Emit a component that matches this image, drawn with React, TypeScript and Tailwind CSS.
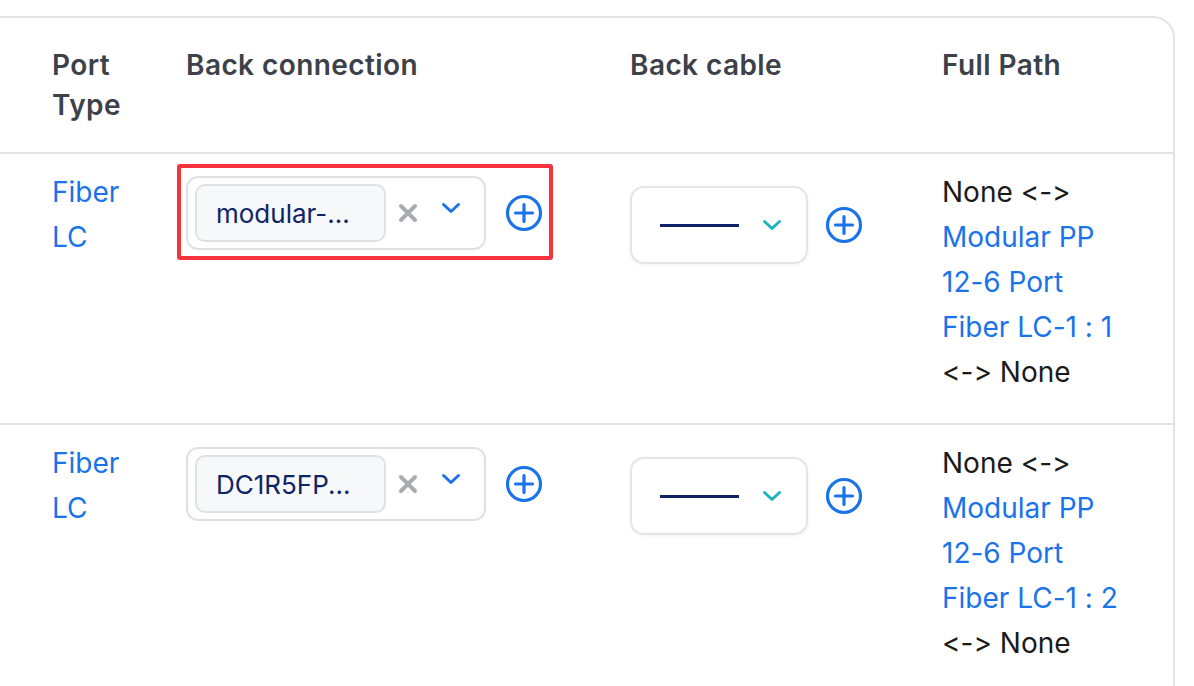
import React from 'react';

type Row = {
    portType: string[];
    connection: string;
    path: string[];
    highlighted?: boolean;
};

const rows: Row[] = [
    { portType: ['Fiber', 'LC'], connection: 'modular-...', path: ['Modular PP', '12-6 Port', 'Fiber LC-1 : 1'], highlighted: true },
    { portType: ['Fiber', 'LC'], connection: 'DC1R5FP...', path: ['Modular PP', '12-6 Port', 'Fiber LC-1 : 2'] },
];

const PlusCircle: React.FC = () => (
    <svg width="38" height="38" viewBox="0 0 38 38" fill="none" stroke="#1a73e8" strokeWidth={3.2} strokeLinecap="round">
        <circle cx="19" cy="19" r="16.5" />
        <path d="M19 10.5v17M10.5 19h17" />
    </svg>
);

const Chevron: React.FC<{ color: string }> = ({ color }) => (
    <svg width="20" height="12" viewBox="0 0 20 12" fill="none" stroke={color} strokeWidth={3} strokeLinecap="round" strokeLinejoin="round">
        <path d="M2.5 2.5l7.5 7 7.5-7" />
    </svg>
);

const Cross: React.FC = () => (
    <svg width="20" height="20" viewBox="0 0 20 20" fill="none" stroke="#a8abb0" strokeWidth={4} strokeLinecap="round">
        <path d="M3 3l14 14M17 3L3 17" />
    </svg>
);

const ConnectionSelect: React.FC<{ value: string; highlighted?: boolean }> = ({ value, highlighted }) => (
    <div className="relative mt-[6px] inline-flex items-center gap-[19px]">
        <div className="flex h-[74px] w-[300px] items-center rounded-[12px] border-2 border-[#dfe1e5] bg-white pl-[7px] pr-[22px]">
            <div className="flex h-[58px] w-[191px] items-center rounded-[10px] border-2 border-[#dfe1e5] bg-[#f7f8f9] pl-[19px] text-[26px] text-[#0d2566]">
                {value}
            </div>
            <div className="ml-[12px] flex h-[58px] items-center">
                <Cross />
            </div>
            <div className="ml-[23px] -mt-[10px] flex items-center">
                <Chevron color="#1a73e8" />
            </div>
        </div>
        <PlusCircle />
        {highlighted && (
            <div className="pointer-events-none absolute -left-[9px] -top-[12px] -bottom-[10px] -right-[10px] rounded-[3px] border-[4px] border-[#f5333f]" />
        )}
    </div>
);

const CableSelect: React.FC = () => (
    <div className="mt-[16px] flex items-center gap-[17px]">
        <div className="flex h-[78px] w-[178px] items-center rounded-[14px] border-2 border-[#e4e5e7] bg-white pl-[28px] pr-[24px] shadow-[0_1px_3px_rgba(0,0,0,0.06)]">
            <div className="h-[3px] w-[79px] bg-[#0d2566]" />
            <div className="ml-auto flex items-center">
                <Chevron color="#1bb5c2" />
            </div>
        </div>
        <PlusCircle />
    </div>
);

export default function App() {
    return (
        <div
            className="min-h-screen bg-white pt-[16px] [font-feature-settings:'calt'_0,'liga'_0]"
            style={{ fontFamily: 'Inter, "Noto Sans", sans-serif' }}
        >
            <div className="w-[1175px] overflow-hidden rounded-tr-[22px] border-t-2 border-r-2 border-[#e1e3e6]">
                <div className="flex border-b-2 border-[#e1e3e6] py-[27px] text-[28px] font-semibold leading-[40px] tracking-[0.015em] text-[#3d4149]">
                    <div className="w-[186px] pl-[52px]">Port<br />Type</div>
                    <div className="w-[444px]">Back connection</div>
                    <div className="w-[312px]">Back cable</div>
                    <div className="flex-1">Full Path</div>
                </div>
                {rows.map((row, i) => (
                    <div key={i} className="flex border-b-2 border-[#e1e3e6] pt-[16px] pb-[28px] text-[28px] leading-[45px]">
                        <div className="w-[186px] pl-[52px] text-[#1a73e8]">
                            {row.portType.map((t) => <div key={t}>{t}</div>)}
                        </div>
                        <div className="w-[444px]">
                            <ConnectionSelect value={row.connection} highlighted={row.highlighted} />
                        </div>
                        <div className="w-[312px]">
                            <CableSelect />
                        </div>
                        <div className="flex-1 text-[#1a1a1a]">
                            <div>None &lt;-&gt;</div>
                            {row.path.map((p) => (
                                <div key={p} className="text-[#1a73e8]">{p}</div>
                            ))}
                            <div>&lt;-&gt; None</div>
                        </div>
                    </div>
                ))}
            </div>
        </div>
    );
}
